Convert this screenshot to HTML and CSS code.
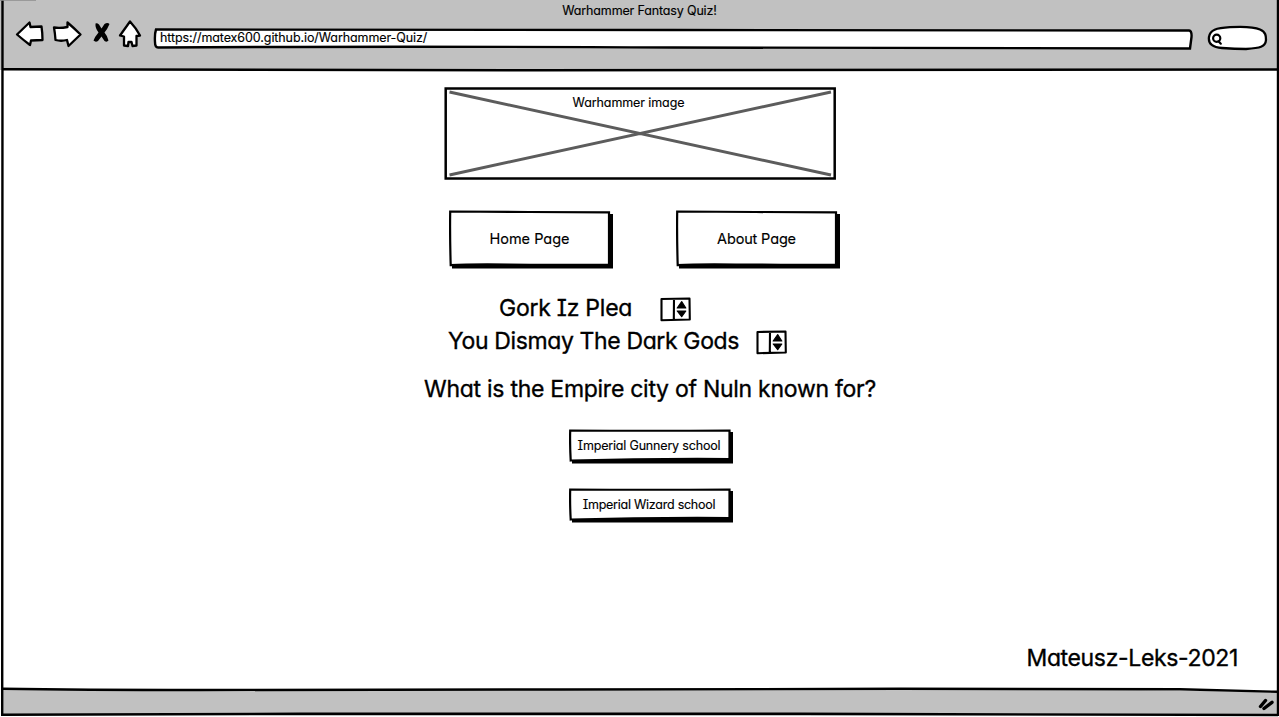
FILE: index.html
```html
<!DOCTYPE html>
<html lang="en">
<head>
<meta charset="utf-8">
<title>Warhammer Fantasy Quiz!</title>
<link rel="stylesheet" href="styles.css">
</head>
<body>
<div class="browser">
  <header class="chrome">
    <div class="title">Warhammer Fantasy Quiz!</div>
    <div class="toolbar">
      <svg class="nav-icons" width="130" height="34" viewBox="14 18 130 34">
        <g fill="#fff" stroke="#000" stroke-width="2.3" stroke-linejoin="round">
          <path d="M17 34.5L29.5 22.5L30.5 27L41.5 26.5Q42.5 33 42.5 40L31 40.5L30 45Q24 40.500 17 34.500Z"/>
          <path d="M54 27.500Q60 28.500 67.500 27L67.500 22.500Q74 28 80.500 34.500L68.500 46L67 40Q61 41.500 55.500 40Q55 33 54 27.500Z"/>
          <path d="M130 21.500Q136 28 140 35.500L136.500 36L136.500 45.500L132.500 46L131.500 42L128.500 42L128 46L124 45.500L124 36.500L120 35.500Z"/>
        </g>
        <path d="M95.500 23.500Q97 22.500 99 24.500L101.500 28.500L104.500 24Q107.500 22 109.500 24Q107.500 29 104.500 32.500Q107.500 36 108.500 40.500Q107 42.500 104.500 41L101.500 36.500L98 41Q95.500 42.500 93.500 40.500Q95 36.500 98.500 32.500Q95 28 95.500 23.500Z"/>
      </svg>
      <div class="address">
        <svg class="sketch" viewBox="0 0 1040 23"><path d="M3 2.500Q300 2 520 3T1036 3.500Q1039 4 1038.500 10L1037 21.500Q800 22 520 20.500T5 20.500Q2 20.500 2 15Q1.500 7 3 2.500Z" fill="#fff" stroke="#000" stroke-width="2.400"/></svg>
        <span class="label url">https://matex600.github.io/Warhammer-Quiz/</span>
      </div>
      <svg class="search" width="62" height="26" viewBox="1206 25 62 26">
        <path d="M1209 37C1210 30 1216 28 1230 27.200Q1252 26 1260 29.500C1266 32 1266 36 1266 40C1265.500 47 1260 48 1246 49Q1235 49 1222 48C1213 47.500 1208 44 1209 37Z" fill="#fff" stroke="#000" stroke-width="2.300"/>
        <g fill="none" stroke="#000" stroke-width="2.200" stroke-linecap="round"><circle cx="1216.700" cy="38.200" r="3.600"/><path d="M1218.500 41.300L1220.800 43.700"/></g>
      </svg>
    </div>
  </header>
  <main class="page">
    <div class="banner">
      <svg class="sketch" viewBox="0 0 392 93"><rect x="1.700" y="1.500" width="389" height="90" fill="#fff" stroke="#000" stroke-width="2.500"/><path d="M5.500 5L387 88M5.500 88L387 5" stroke="#5c5c5c" stroke-width="2.900"/></svg>
      <span class="label banner-text">Warhammer image</span>
    </div>
    <nav class="links">
      <a class="button"><svg class="sketch" viewBox="0 0 164 59"><path d="M3 4H164V58.500H3Z"/><path d="M1.200 1.500L80 2L160 2.300V54.500Q100 55 60 54.500T1.700 55.200Q.8 25 1.200 1.500Z" fill="#fff" stroke="#000" stroke-width="2.200"/></svg><span class="label home">Home Page</span></a>
      <a class="button"><svg class="sketch" viewBox="0 0 164 59"><path d="M3 4H164V58.500H3Z"/><path d="M1.200 1.500L80 2L160 2.300V54.500Q100 55 60 54.500T1.700 55.200Q.8 25 1.200 1.500Z" fill="#fff" stroke="#000" stroke-width="2.200"/></svg><span class="label about">About Page</span></a>
    </nav>
    <section class="scores">
      <div class="score first">
        <span class="label gork">Gork Iz Plea</span>
        <svg class="stepper" width="32" height="25" viewBox="0 0 32 25"><path d="M1.500 2L29.500 1.500L29.800 22.500L1.500 23.200ZM14 2L13.800 23" fill="#fff" stroke="#000" stroke-width="2.100" stroke-linejoin="round"/><path d="M21.700 4.700L25.800 11H17.200ZM17.200 14H25.800L21.700 19.700Z" stroke="#000" stroke-width="1.200" stroke-linejoin="round"/></svg>
      </div>
      <div class="score second">
        <span class="label dismay">You Dismay The Dark Gods</span>
        <svg class="stepper" width="32" height="25" viewBox="0 0 32 25"><path d="M1.500 2L29.500 1.500L29.800 22.500L1.500 23.200ZM14 2L13.800 23" fill="#fff" stroke="#000" stroke-width="2.100" stroke-linejoin="round"/><path d="M21.700 4.700L25.800 11H17.200ZM17.200 14H25.800L21.700 19.700Z" stroke="#000" stroke-width="1.200" stroke-linejoin="round"/></svg>
      </div>
    </section>
    <h1 class="question"><span class="label">What is the Empire city of Nuln known for?</span></h1>
    <div class="answers">
      <a class="button answer"><svg class="sketch" viewBox="0 0 164 35"><path d="M3 4L164 3V34.500H3Z"/><path d="M1.200 1.500Q80 2 160.500 1.500V30Q80 29.500 1.700 31.500Q.8 15 1.200 1.500Z" fill="#fff" stroke="#000" stroke-width="2.200"/></svg><span class="label gunnery">Imperial Gunnery school</span></a>
      <a class="button answer"><svg class="sketch" viewBox="0 0 164 35"><path d="M3 4L164 3V34.500H3Z"/><path d="M1.200 1.500Q80 2 160.500 1.500V30Q80 29.500 1.700 31.500Q.8 15 1.200 1.500Z" fill="#fff" stroke="#000" stroke-width="2.200"/></svg><span class="label wizard">Imperial Wizard school</span></a>
    </div>
    <div class="credit"><span class="label">Mateusz-Leks-2021</span></div>
  </main>
  <footer class="status"></footer>
  <svg class="frame" viewBox="0 0 1279 717">
    <path d="M2 690H400L1070 689L1278 692V716H2Z" fill="#c1c1c1"/>
    <g fill="none" stroke="#000" stroke-width="2.400">
      <path d="M2.500 69.200Q200 70 540 70.300T1278 69.500"/>
      <path d="M2.500 688.800Q80 690 200 690L560 689.500L900 688.800L1180 689.300L1278 691.800"/>
      <path d="M2.500 0L2.200 714.800Q150 714 300 713.700T800 713.800L1278 715M1278 0V716"/>
      <path d="M0 0.300H36" stroke="#909090" stroke-width="1"/>
    </g>
    <path d="M1260.500 706.500L1265.500 700.500M1264 708.500L1272 702.300" stroke="#000" stroke-width="3.400" stroke-linecap="round"/>
  </svg>
</div>
</body>
</html>
```

FILE: styles.css
```css
* { box-sizing: border-box; }
body { margin: 0; background: #fff; color: #000; overflow: hidden; font-family: Inter, "Liberation Sans", sans-serif; font-feature-settings: "cv11", "cv08", "calt" 0; -webkit-text-stroke: 0.15px #000; }
.browser { position: relative; width: 1279px; height: 717px; display: flex; flex-direction: column; }
.chrome { height: 70px; background: #c1c1c1; }
.title { height: 20px; line-height: 22px; text-align: center; font-size: 12.5px; letter-spacing: -0.15px; }
.toolbar { display: flex; align-items: flex-start; padding-left: 14px; margin-top: -2px; }
.nav-icons { flex: none; }
.address { position: relative; width: 1040px; height: 23px; margin: 9px 0 0 9px; padding: 0 0 2px 7px; display: flex; align-items: center; }
.search { flex: none; margin: 7px 0 0 13px; }
.sketch { position: absolute; inset: 0; width: 100%; height: 100%; }
.label { position: relative; white-space: nowrap; }
.url { font-size: 12.5px; letter-spacing: -0.09px; }
.page { flex: 1; display: flex; flex-direction: column; align-items: center; }
.banner { position: relative; width: 392px; height: 93px; margin-top: 17px; padding-top: 7px; text-align: center; font-size: 12.5px; line-height: 17px; letter-spacing: -0.1px; }
.banner-text { margin-right: 22px; }
.links { display: flex; gap: 63px; margin: 30px 0 0 10px; }
.button { position: relative; display: flex; align-items: center; justify-content: center; width: 164px; height: 59px; padding-right: 3px; padding-bottom: 2px; font-size: 14.5px; }
.about { letter-spacing: -0.15px; }
.scores { width: 383px; height: 68px; margin: 24px 0 0 0; display: flex; flex-direction: column; gap: 4px; }
.score { display: flex; align-items: center; height: 29px; font-size: 23px; -webkit-text-stroke-width: 0.35px; }
.first { padding-left: 51px; }
.gork { letter-spacing: -0.25px; }
.dismay { letter-spacing: -0.37px; }
.stepper { margin-left: auto; margin-top: 4px; }
.first .stepper { margin-right: 139px; }
.second .stepper { margin-right: 43px; }
.question { margin: 10px 0 0 21px; font-size: 23px; font-weight: 400; line-height: 36px; letter-spacing: -0.27px; -webkit-text-stroke-width: 0.35px; }
.answers { display: flex; flex-direction: column; gap: 24px; margin: 22px 0 0 22px; }
.answer { height: 35px; font-size: 12.5px; }
.gunnery { letter-spacing: -0.18px; }
.wizard { letter-spacing: -0.25px; }
.credit { align-self: flex-end; margin: 117px 41px 0 0; font-size: 23px; line-height: 36px; letter-spacing: -0.35px; -webkit-text-stroke-width: 0.35px; }
.status { height: 27px; }
.frame { position: absolute; inset: 0; width: 1279px; height: 717px; pointer-events: none; }
```
